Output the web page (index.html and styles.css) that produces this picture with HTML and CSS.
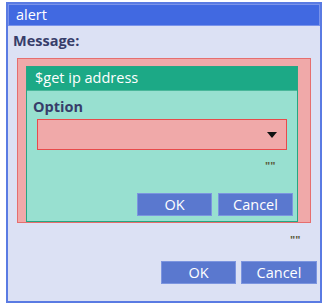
FILE: index.html
```html
<!DOCTYPE html>
<html lang="en">
<head>
    <meta charset="UTF-8">
    <meta name="viewport" content="width=device-width, initial-scale=1.0">
    <title>alert</title>
    <link rel="stylesheet" href="styles.css">
</head>
<body>
    <div class="dialog">
        <div class="title">alert</div>
        <div class="content">
            <div class="label">Message:</div>
            <div class="message">
                <div class="inner">
                    <div class="inner-title">$get ip address</div>
                    <div class="inner-body">
                        <div class="label small">Option</div>
                        <div class="select"><span class="arrow"></span></div>
                        <div class="value">""</div>
                        <div class="buttons">
                            <button class="btn">OK</button>
                            <button class="btn">Cancel</button>
                        </div>
                    </div>
                </div>
            </div>
            <div class="value outer-value">""</div>
            <div class="buttons outer-buttons">
                <button class="btn">OK</button>
                <button class="btn wide">Cancel</button>
            </div>
        </div>
    </div>
</body>
</html>
```

FILE: styles.css
```css
body {
    margin: 0;
    background-color: #ffffff;
    font-family: "Open Sans", "Noto Sans", sans-serif;
}
.dialog {
    position: relative;
    margin: 2px 0 0 6px;
    width: 312px;
    height: 297px;
    border: 2px solid #5a7be3;
    background-color: #dce1f4;
}
.title {
    height: 20px;
    line-height: 19px;
    padding-left: 7px;
    background-color: #4169e1;
    border: 1px solid #7a93ea;
    color: #ffffff;
    font-size: 14.5px;
}
.content {
    padding: 0 9px;
}
.label {
    margin: 5px 0 0 -4px;
    height: 27px;
    font-size: 14.5px;
    font-weight: bold;
    color: #373d6a;
}
.message {
    height: 156px;
    padding: 7px 0 0 8px;
    background-color: #f0a9a9;
    border: 1px solid #e66e6e;
}
.inner {
    width: 270px;
    height: 154px;
    border: 1px solid #26a684;
    background-color: #98e0d0;
}
.inner-title {
    height: 23px;
    line-height: 22px;
    padding-left: 8px;
    background-color: #1ca986;
    border-bottom: 1px solid #4ab79a;
    color: #ffffff;
    font-size: 14.5px;
}
.inner-body {
    padding: 0 4px 0 10px;
}
.label.small {
    margin: 6px 0 0 -4px;
    height: 22px;
}
.select {
    position: relative;
    width: 248px;
    height: 29px;
    background-color: #f0a9a9;
    border: 1px solid #e84b4b;
}
.arrow {
    position: absolute;
    right: 9px;
    top: 12px;
    border-left: 5px solid transparent;
    border-right: 5px solid transparent;
    border-top: 6px solid #111111;
}
.value {
    margin: 11px 0 0 228px;
    height: 13px;
    line-height: 9px;
    font-size: 11px;
    font-weight: bold;
    color: #5a5a3a;
}
.buttons {
    display: flex;
    justify-content: flex-end;
    gap: 6px;
    margin-top: 19px;
}
.btn {
    width: 75px;
    height: 23px;
    padding: 0;
    border: 1px solid #7c95df;
    background-color: #5a78cf;
    color: #ffffff;
    font-family: "Open Sans", "Noto Sans", sans-serif;
    font-size: 14.5px;
    line-height: 20px;
}
.outer-value {
    margin: 12px 0 0 273px;
}
.outer-buttons {
    gap: 5px;
    margin: 13px -6px 0 0;
}
.btn.wide {
    width: 76px;
}
```
